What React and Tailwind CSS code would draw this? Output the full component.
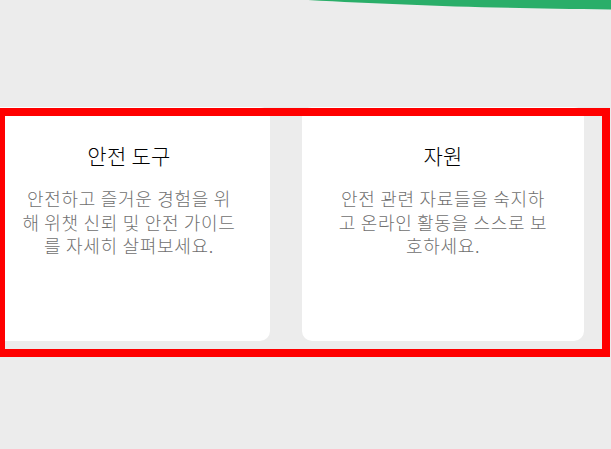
const cards = [
  {
    title: '안전 도구',
    body: '안전하고 즐거운 경험을 위해 위챗 신뢰 및 안전 가이드를 자세히 살펴보세요.',
  },
  {
    title: '자원',
    body: '안전 관련 자료들을 숙지하고 온라인 활동을 스스로 보호하세요.',
  },
];

export default function App() {
  return (
    <div
      className="relative w-full h-[449px] overflow-hidden bg-[#ececec]"
      style={{ fontFamily: '"Noto Sans CJK KR", "Noto Sans", sans-serif' }}
    >
      {/* green curve at the top */}
      <svg className="absolute top-0 left-0" width="611" height="12" viewBox="0 0 611 12">
        <path d="M308 0 C 400 5, 480 8, 611 9.5 L 611 0 Z" fill="#2aae69" />
      </svg>

      <div className="pt-[107px] -ml-3 flex gap-8">
        {cards.map((c) => (
          <div key={c.title} className="w-[282px] h-[234px] shrink-0 bg-white rounded-[10px] px-8 pt-[34px] text-center">
            <h3 className="text-[21px] leading-7 tracking-[0.3px] font-light text-black mb-[18px]">{c.title}</h3>
            <p className="text-[18px] leading-[23.5px] tracking-[0.7px] font-light text-[#6f6f6f] break-all">{c.body}</p>
          </div>
        ))}
      </div>

      {/* red highlight frame */}
      <div className="absolute left-[-3px] top-[108px] w-[613px] h-[249px] border-8 border-[#ff0000]" />
    </div>
  );
}
